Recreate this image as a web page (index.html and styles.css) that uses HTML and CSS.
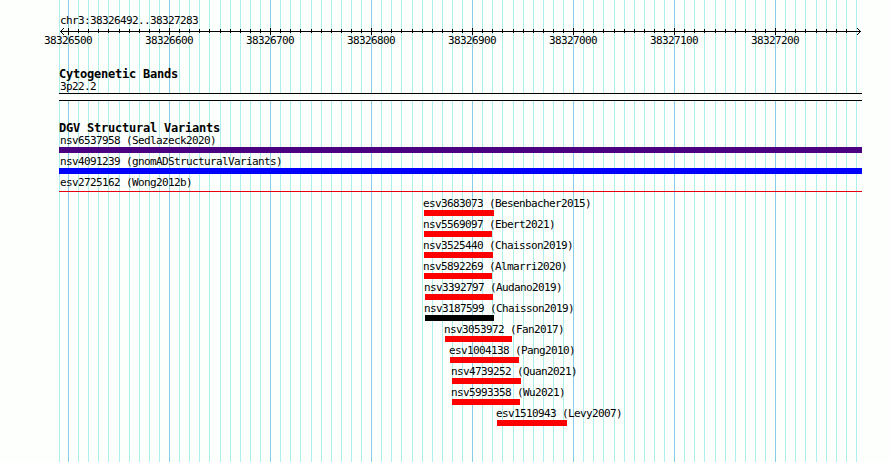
FILE: index.html
```
<!DOCTYPE html>
<html>
<head>
    <meta charset="utf-8">
    <title>DGV Structural Variants</title>
    <link rel="stylesheet" href="styles.css">
</head>
<body>

<svg class="grid" id="grid" width="890" height="462" shape-rendering="crispEdges"></svg>

<main>
    <header class="ruler">
        <div class="label">chr3:38326492..38327283</div>
        <svg class="axis" id="axis" width="890" height="9" shape-rendering="crispEdges"></svg>
        <div class="numbers">
            <span>38326500</span>
            <span>38326600</span>
            <span>38326700</span>
            <span>38326800</span>
            <span>38326900</span>
            <span>38327000</span>
            <span>38327100</span>
            <span>38327200</span>
        </div>
    </header>

    <section class="cytobands">
        <h2>Cytogenetic Bands</h2>
        <div class="label">3p22.2</div>
        <div class="band"></div>
    </section>

    <section class="variants">
        <h2>DGV Structural Variants</h2>
        <div id="features"></div>
    </section>
</main>

<script>
    // name, left edge, width, class
    const features = [
        ['nsv6537958 (Sedlazeck2020)', 59, 803, 'purple'],
        ['nsv4091239 (gnomADStructuralVariants)', 59, 803, 'blue'],
        ['esv2725162 (Wong2012b)', 59, 803, 'thin'],
        ['esv3683073 (Besenbacher2015)', 424, 70, 'red'],
        ['nsv5569097 (Ebert2021)', 424, 68, 'red'],
        ['nsv3525440 (Chaisson2019)', 424, 69, 'red'],
        ['nsv5892269 (Almarri2020)', 424, 68, 'red'],
        ['nsv3392797 (Audano2019)', 425, 68, 'red'],
        ['nsv3187599 (Chaisson2019)', 425, 69, 'black'],
        ['nsv3053972 (Fan2017)', 445, 67, 'red'],
        ['esv1004138 (Pang2010)', 450, 69, 'red'],
        ['nsv4739252 (Quan2021)', 452, 69, 'red'],
        ['nsv5993358 (Wu2021)', 452, 68, 'red'],
        ['esv1510943 (Levy2007)', 497, 70, 'red']
    ];

    let rows = '';
    for (const [name, left, width, color] of features) {
        const indent = left == 59 ? 1 : -1;
        rows += '<div class="feature" style="margin-left: ' + (left - 59) + 'px">' +
            '<div class="name" style="text-indent: ' + indent + 'px">' + name + '</div>' +
            '<div class="bar ' + color + '" style="width: ' + width + 'px"></div></div>';
    }
    document.getElementById('features').innerHTML = rows;

    // one line every 10 bp, a darker one every 100 bp
    let lines = '<rect class="minor" x="59" y="0" width="1" height="462"/>';
    let ticks = '<rect x="60" y="4" width="801" height="1"/>';
    for (let i = 0; i < 79; i++) {
        const x = Math.round(68.08 + i * 10.101);
        const major = i % 10 == 0;
        lines += '<rect class="' + (major ? 'major' : 'minor') + '" x="' + x + '" y="0" width="1" height="462"/>';
        if (i < 78) {
            ticks += '<rect x="' + x + '" y="' + (major ? 1 : 2) + '" width="1" height="' + (major ? 7 : 4) + '"/>';
        }
    }
    // arrowheads
    for (let i = 1; i < 4; i++) {
        ticks += '<rect x="' + (60 + i) + '" y="' + (4 - i) + '" width="1" height="1"/>' +
            '<rect x="' + (60 + i) + '" y="' + (4 + i) + '" width="1" height="1"/>' +
            '<rect x="' + (860 - i) + '" y="' + (4 - i) + '" width="1" height="1"/>' +
            '<rect x="' + (860 - i) + '" y="' + (4 + i) + '" width="1" height="1"/>';
    }
    document.getElementById('grid').innerHTML = lines;
    document.getElementById('axis').innerHTML = ticks;
</script>

</body>
</html>
```
FILE: styles.css
```
body {
    margin: 0;
    height: 462px;
    overflow: hidden;
    background-color: #fdfffc;
    color: black;
    font-family: "DejaVu Sans Mono", monospace;
    font-size: 11px;
    line-height: 13px;
    letter-spacing: -0.622px;
}

/* the grid lies behind all the tracks */
.grid {
    position: absolute;
    top: 0;
    left: 0;
}

.minor {
    fill: #afeeee;
}

.major {
    fill: #87ceeb;
}

main {
    position: relative;
    padding-top: 14px;
}

.ruler {
    height: 55px;
}

.label {
    padding-left: 60px;
}

.axis {
    display: block;
}

.numbers {
    display: flex;
    gap: 53px;
    margin-top: -2px;
    padding-left: 44px;
}

.numbers span {
    width: 48px;
    white-space: nowrap;
}

h2 {
    margin: 0;
    padding-left: 59px;
    font-size: 12px;
    line-height: 11px;
    letter-spacing: -0.224px;
}

.band {
    box-sizing: border-box;
    width: 803px;
    height: 8px;
    margin-left: 59px;
    border-top: 1px solid black;
    border-bottom: 1px solid black;
    background-color: #fdfffc;
}

.variants {
    margin-top: 22px;
}

#features {
    padding-left: 59px;
}

.feature {
    height: 21px;
    white-space: nowrap;
}

.bar {
    height: 6px;
}

.purple {
    background-color: #4b0082;
}

.blue {
    background-color: #0000ff;
}

.red {
    background-color: #ff0000;
}

.black {
    background-color: #000000;
}

.thin {
    height: 1px;
    margin-top: 2px;
    background-color: #e60012;
}
```
